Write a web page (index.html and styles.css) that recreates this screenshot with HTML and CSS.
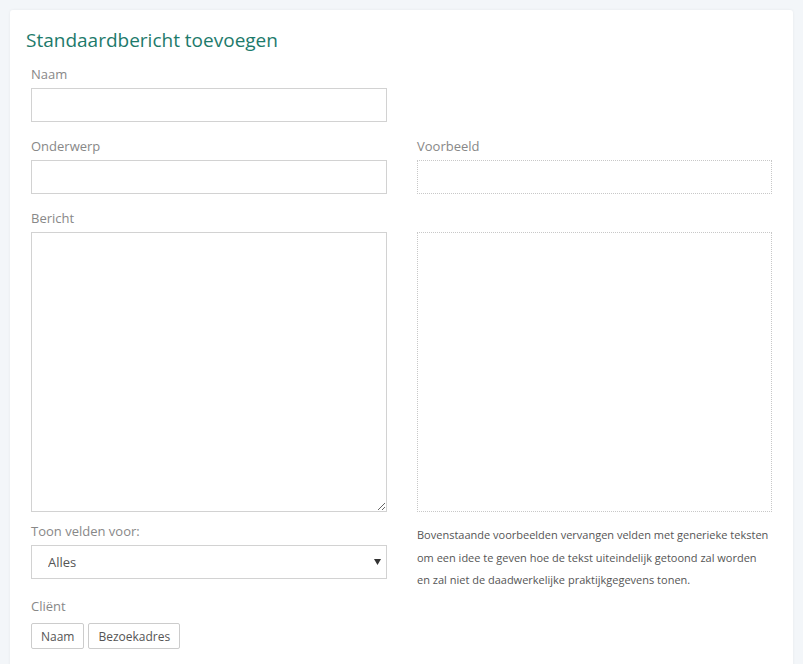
FILE: index.html
```html
<!DOCTYPE html>
<html>
<head>
	<title>Standaardbericht toevoegen</title>
	<meta charset="utf-8">
	<link rel="stylesheet" href="styles.css">
</head>
<body>

	<div class="panel">
		<h2 class="panel-title">Standaardbericht toevoegen</h2>

		<form class="message-form">
			<div class="field">
				<label for="name">Naam</label>
				<input type="text" id="name" class="input">
			</div>
			<div></div>

			<div class="field">
				<label for="subject">Onderwerp</label>
				<input type="text" id="subject" class="input">
			</div>
			<div class="field">
				<label>Voorbeeld</label>
				<div class="preview preview-subject"></div>
			</div>

			<div class="field field-body">
				<label for="body">Bericht</label>
				<textarea id="body" class="input body-input"></textarea>
			</div>
			<div class="field field-body">
				<div class="preview preview-body"></div>
			</div>

			<div>
				<div class="field">
					<label for="scope">Toon velden voor:</label>
					<div class="select-wrap">
						<select id="scope" class="input select">
							<option>Alles</option>
						</select>
						<svg class="select-arrow" width="7" height="6" viewBox="0 0 7 6"><path d="M0 0h7L3.5 6z" fill="#333"/></svg>
					</div>
				</div>
				<div class="field-group">
					<label>Cliënt</label>
					<div class="tags">
						<button type="button" class="tag">Naam</button>
						<button type="button" class="tag">Bezoekadres</button>
					</div>
				</div>
			</div>
			<p class="note">Bovenstaande voorbeelden vervangen velden met generieke teksten om een idee te geven hoe de tekst uiteindelijk getoond zal worden en zal niet de daadwerkelijke praktijkgegevens tonen.</p>
		</form>
	</div>

</body>
</html>
```

FILE: styles.css
```css
body {
	margin: 0;
	background: #f3f6f9;
	font-family: "Open Sans", "Liberation Sans", sans-serif;
	color: #555;
}

.panel {
	margin: 10px 10px 0 10px;
	min-height: 700px;
	background: #fff;
	border-radius: 3px;
	box-shadow: 0 0 3px rgba(0, 0, 0, 0.06);
	padding: 19px 21px 0 16px;
}

.panel-title {
	margin: 0 0 14px 0;
	font-size: 19px;
	font-weight: 400;
	line-height: 22px;
	color: #1d7a6b;
}

.message-form {
	display: grid;
	grid-template-columns: 356px 355px;
	column-gap: 30px;
	padding-left: 5px;
}

.field {
	margin-bottom: 15px;
}

.field-body {
	margin-bottom: 10px;
}

label {
	display: block;
	font-size: 13px;
	line-height: 18px;
	color: #888;
	margin-bottom: 5px;
}

.input {
	display: block;
	box-sizing: border-box;
	width: 100%;
	height: 34px;
	margin: 0;
	border: 1px solid #d2d2d2;
	border-radius: 0;
	background: #fff;
	font-family: inherit;
	font-size: 13px;
	color: #555;
}

.body-input {
	height: 280px;
	resize: vertical;
}

.preview {
	box-sizing: border-box;
	border: 1px dotted #c8c8c8;
	height: 34px;
}

.preview-body {
	height: 280px;
	margin-top: 23px;
}

.select-wrap {
	position: relative;
}

.select {
	appearance: none;
	-webkit-appearance: none;
	padding: 0 16px;
	outline: none;
}

.select-arrow {
	position: absolute;
	right: 6px;
	top: 14px;
}

.field-group {
	padding-top: 3px;
}

.field-group label {
	margin-bottom: 8px;
}

.tags {
	display: flex;
	gap: 4px;
}

.tag {
	height: 26px;
	padding: 0 9px;
	border: 1px solid #ccc;
	border-radius: 2px;
	background: #fff;
	font-family: inherit;
	font-size: 12px;
	color: #555;
}

.note {
	margin: 2px 0 0 0;
	padding-right: 2px;
	font-size: 11px;
	line-height: 22.5px;
	color: #555;
}
```
